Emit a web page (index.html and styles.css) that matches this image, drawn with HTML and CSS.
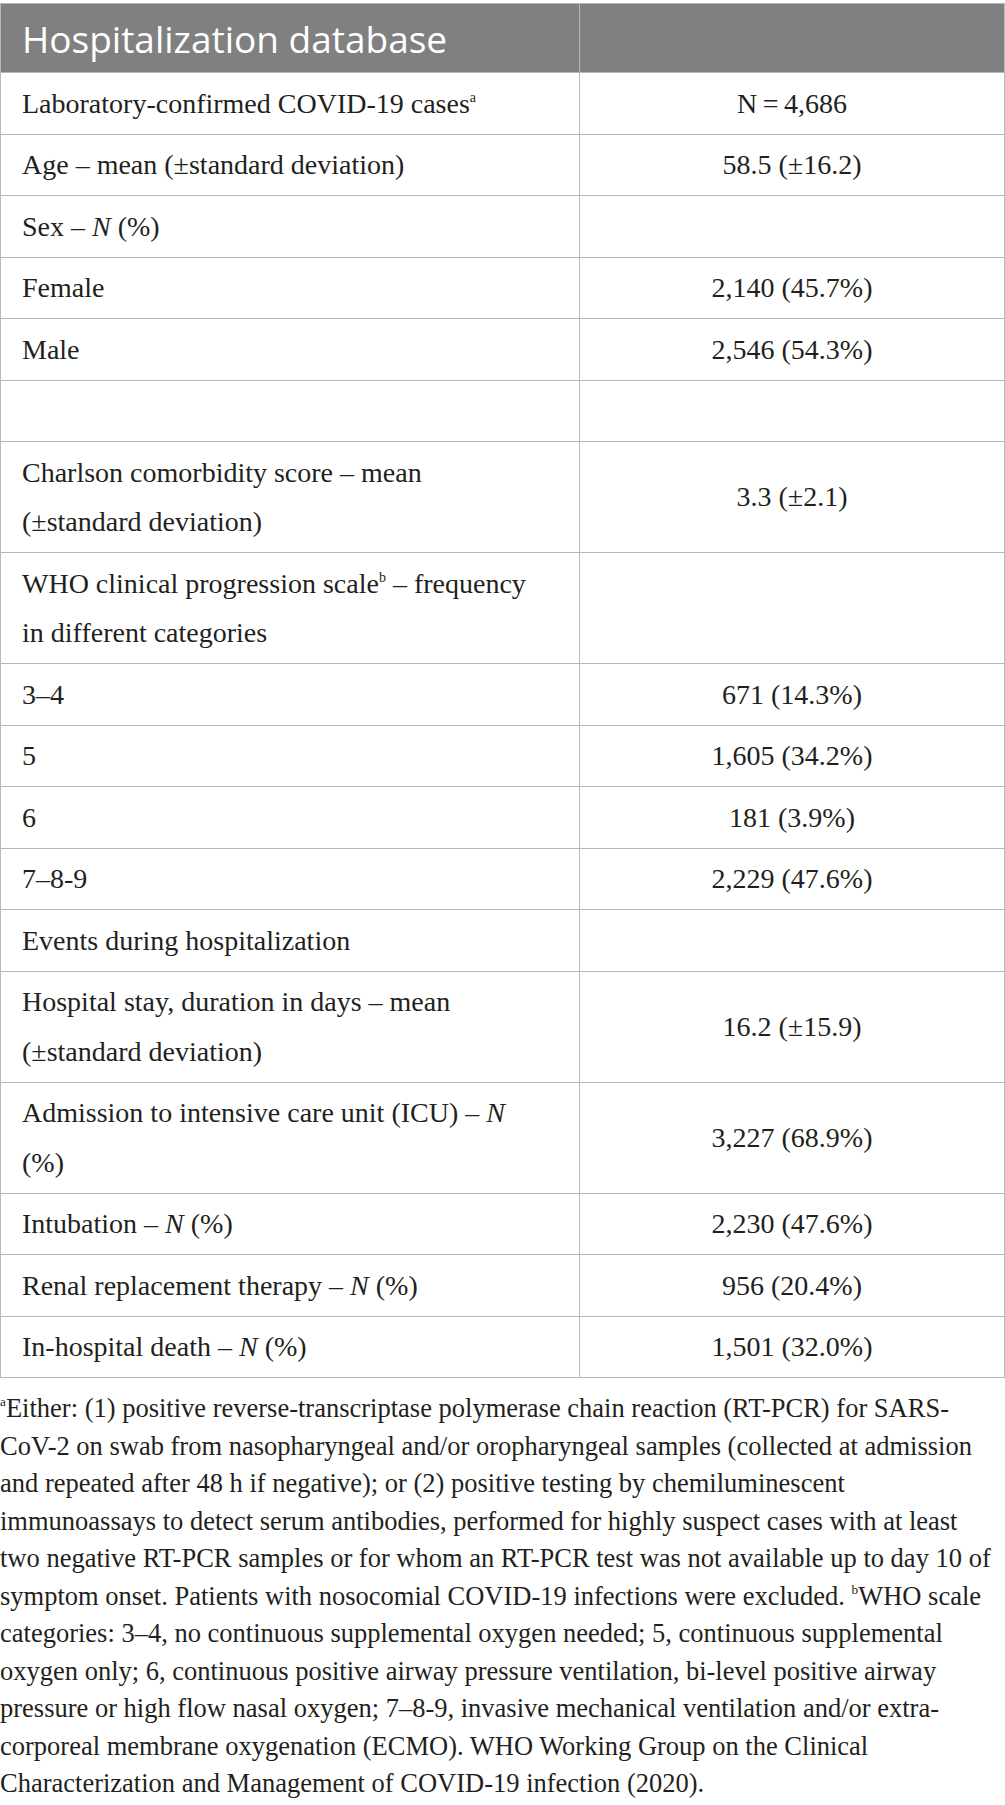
FILE: index.html
```html
<!DOCTYPE html>
<html lang="en">
<head>
    <meta charset="UTF-8">
    <meta name="viewport" content="width=device-width, initial-scale=1.0">
    <title>Hospitalization database</title>
    <link rel="stylesheet" href="styles.css">
</head>
<body>
    <table class="data-table">
        <thead>
            <tr>
                <th class="head-cell">Hospitalization database</th>
                <th class="head-cell"></th>
            </tr>
        </thead>
        <tbody>
            <tr><td>Laboratory-confirmed COVID-19 cases<sup>a</sup></td><td class="val">N&thinsp;=&thinsp;4,686</td></tr>
            <tr><td>Age – mean (±standard deviation)</td><td class="val">58.5 (±16.2)</td></tr>
            <tr><td>Sex – <i>N</i> (%)</td><td class="val"></td></tr>
            <tr><td>Female</td><td class="val">2,140 (45.7%)</td></tr>
            <tr><td>Male</td><td class="val">2,546 (54.3%)</td></tr>
            <tr><td>&nbsp;</td><td class="val"></td></tr>
            <tr><td>Charlson comorbidity score – mean (±standard deviation)</td><td class="val">3.3 (±2.1)</td></tr>
            <tr><td>WHO clinical progression scale<sup>b</sup> – frequency in different categories</td><td class="val"></td></tr>
            <tr><td>3–4</td><td class="val">671 (14.3%)</td></tr>
            <tr><td>5</td><td class="val">1,605 (34.2%)</td></tr>
            <tr><td>6</td><td class="val">181 (3.9%)</td></tr>
            <tr><td>7–8-9</td><td class="val">2,229 (47.6%)</td></tr>
            <tr><td>Events during hospitalization</td><td class="val"></td></tr>
            <tr><td>Hospital stay, duration in days – mean (±standard deviation)</td><td class="val">16.2 (±15.9)</td></tr>
            <tr><td>Admission to intensive care unit (ICU) – <i>N</i> (%)</td><td class="val">3,227 (68.9%)</td></tr>
            <tr><td>Intubation – <i>N</i> (%)</td><td class="val">2,230 (47.6%)</td></tr>
            <tr><td>Renal replacement therapy – <i>N</i> (%)</td><td class="val">956 (20.4%)</td></tr>
            <tr><td>In-hospital death – <i>N</i> (%)</td><td class="val">1,501 (32.0%)</td></tr>
        </tbody>
    </table>

    <!-- a capo come nell'originale -->
    <p class="footnote"><sup>a</sup>Either: (1) positive reverse-transcriptase polymerase chain reaction (RT-PCR) for SARS-<br>CoV-2 on swab from nasopharyngeal and/or oropharyngeal samples (collected at admission<br>and repeated after 48 h if negative); or (2) positive testing by chemiluminescent<br>immunoassays to detect serum antibodies, performed for highly suspect cases with at least<br>two negative RT-PCR samples or for whom an RT-PCR test was not available up to day 10 of<br>symptom onset. Patients with nosocomial COVID-19 infections were excluded. <sup>b</sup>WHO scale<br>categories: 3–4, no continuous supplemental oxygen needed; 5, continuous supplemental<br>oxygen only; 6, continuous positive airway pressure ventilation, bi-level positive airway<br>pressure or high flow nasal oxygen; 7–8-9, invasive mechanical ventilation and/or extra-<br>corporeal membrane oxygenation (ECMO). WHO Working Group on the Clinical<br>Characterization and Management of COVID-19 infection (2020).</p>
</body>
</html>
```

FILE: styles.css
```css
body {
    margin: 0;
    background-color: #ffffff;
    color: #231f20;
    font-family: "Liberation Serif", "Times New Roman", serif;
    font-size: 28px;
}
.data-table {
    width: 100%;
    margin-top: 3px;
    border-collapse: collapse;
    border: 1px solid #b8b8b8;
}
.head-cell {
    background-color: #808080; /* header grigio */
    color: #ffffff;
    font-family: "Open Sans", sans-serif;
    font-weight: 400;
    font-size: 37px;
    text-align: left;
    height: 68px;
    padding: 0 21px;
    border: 1px solid #b8b8b8;
    line-height: 1;
}
.head-cell:first-child {
    width: 536px;
}
td {
    border: 1px solid #b8b8b8;
    padding: 5.5px 34px 5.5px 21px;
    line-height: 49.5px;
    vertical-align: middle;
}
td.val {
    text-align: center;
    padding: 5.5px 21px;
}
sup {
    font-size: 0.5em;
    line-height: 0;
    vertical-align: 0.8em;
}
.footnote {
    margin: 12px 0 0 0;
    font-size: 26.5px;
    line-height: 37.5px;
    white-space: nowrap;
}
```
